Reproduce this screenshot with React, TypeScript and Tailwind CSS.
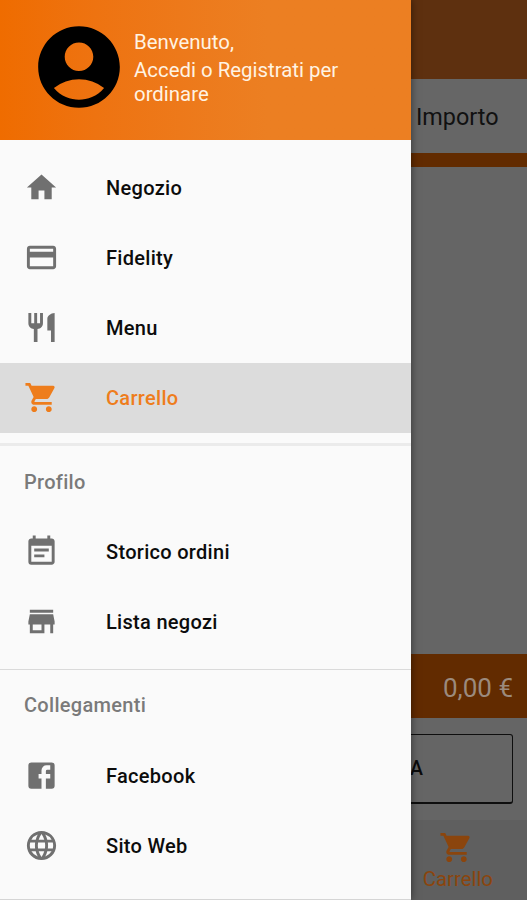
import type { ReactNode } from 'react';
import type { IconType } from 'react-icons';
import {
  MdAccountCircle,
  MdEventNote,
  MdHome,
  MdLanguage,
  MdPayment,
  MdRestaurant,
  MdShoppingCart,
  MdStore,
} from 'react-icons/md';

function FacebookBox({ className }: { className?: string }) {
  return (
    <svg viewBox="0 0 24 24" fill="currentColor" className={className}>
      <path d="M5 3H19A2 2 0 0 1 21 5V19A2 2 0 0 1 19 21H5A2 2 0 0 1 3 19V5A2 2 0 0 1 5 3M18 5H15.5A3.5 3.5 0 0 0 12 8.5V11H10V14H12V21H15V14H18V11H15V9A1 1 0 0 1 16 8H18V5Z" />
    </svg>
  );
}

interface ItemProps {
  icon: IconType | typeof FacebookBox;
  label: string;
  active?: boolean;
}

function Item({ icon: Icon, label, active }: ItemProps) {
  return (
    <li
      className={`flex h-[70.25px] items-center pl-[23.5px] text-[20px] font-medium tracking-[0.3px] ${
        active ? 'bg-[#dcdcdc] text-[#ee7d1c]' : 'text-[#0c0c0c]'
      }`}
    >
      <Icon className={`mr-[47.5px] h-[35px] w-[35px] shrink-0 ${active ? '' : 'text-[#707070]'}`} />
      <span className="pt-px">{label}</span>
    </li>
  );
}

function SectionTitle({ children }: { children: ReactNode }) {
  return (
    <h2 className="flex h-[70.5px] items-center pt-px pl-6 text-[20px] font-medium tracking-[0.3px] text-[#7a7a7a]">{children}</h2>
  );
}

function Drawer() {
  return (
    <aside className="absolute inset-y-0 left-0 flex w-[410.5px] flex-col bg-[#fafafa] shadow-[0_0_8px_rgba(0,0,0,0.5)]">
      <header className="flex h-[139.5px] shrink-0 bg-linear-to-r from-[#ef6c00] to-[#ec7f22] to-65% pl-[30px]">
        <MdAccountCircle className="mt-[18px] h-[98px] w-[98px] shrink-0 text-black" />
        <div className="ml-[6px] pt-[30px] text-[20.4px] leading-6 text-[#fff3e3]">
          <p className="mb-1">Benvenuto,</p>
          <p>
            Accedi o Registrati per
            <br />
            ordinare
          </p>
        </div>
      </header>

      <nav className="flex flex-col">
        <ul className="pt-[12.5px]">
          <Item icon={MdHome} label="Negozio" />
          <Item icon={MdPayment} label="Fidelity" />
          <Item icon={MdRestaurant} label="Menu" />
          <Item icon={MdShoppingCart} label="Carrello" active />
        </ul>

        <div className="mt-[10px] h-[3px] bg-[#ebebeb]" />
        <SectionTitle>Profilo</SectionTitle>
        <ul>
          <Item icon={MdEventNote} label="Storico ordini" />
          <Item icon={MdStore} label="Lista negozi" />
        </ul>

        <div className="mt-[11.5px] h-px bg-[#dadada]" />
        <SectionTitle>Collegamenti</SectionTitle>
        <ul>
          <Item icon={FacebookBox} label="Facebook" />
          <Item icon={MdLanguage} label="Sito Web" />
        </ul>
      </nav>
      <div className="mt-auto h-[1.5px] bg-[#d5d5d5]" />
    </aside>
  );
}

// Cart page, already dimmed by the open drawer
function CartPage() {
  return (
    <main className="flex h-full flex-col bg-[#656565]">
      <div className="h-[79px] shrink-0 bg-[#5e300f]" />
      <div className="flex h-[74px] shrink-0 items-center justify-end bg-[#666666] pt-1 pr-[28.5px] text-[23.4px] text-[#111111]">
        Importo
      </div>
      <div className="h-[14px] shrink-0 bg-[#622b00]" />
      <div className="flex-1" />
      <div className="flex h-[64px] shrink-0 items-center justify-end bg-[#622b00] pt-1 pr-[14px] text-[26px] text-[#9b8a7d]">
        0,00 €
      </div>
      <div className="flex h-[102px] shrink-0 items-center px-[14px]">
        <div className="flex h-[70px] w-full items-center justify-end rounded-[3px] border-[1.5px] border-b-2 border-[#0e0e0e] pr-[89px] text-[19.5px] font-medium text-[#0b0b0b]">
          CONFERMA
        </div>
      </div>
      <div className="flex h-[80px] shrink-0 justify-end bg-[#5f5f5f] pr-[34px]">
        <div className="flex flex-col items-center pt-[10px] text-[20.4px] text-[#8b450d]">
          <MdShoppingCart className="mr-[3px] h-[35px] w-[35px]" />
          <span className="leading-[28px]">Carrello</span>
        </div>
      </div>
    </main>
  );
}

export default function App() {
  return (
    <div className="relative h-[900px] w-[527px] overflow-hidden font-['Roboto',sans-serif]">
      <CartPage />
      <Drawer />
    </div>
  );
}
